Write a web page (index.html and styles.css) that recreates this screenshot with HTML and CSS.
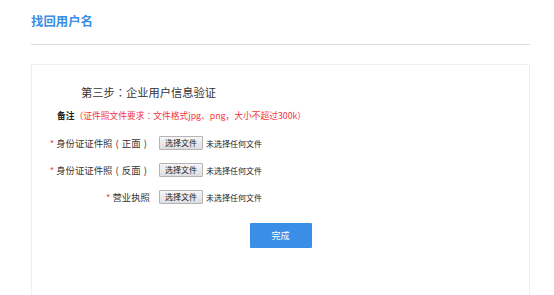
FILE: index.html
```html
<!DOCTYPE html>
<html lang="zh-CN">
<head>
<meta charset="utf-8">
<title>找回用户名</title>
<link rel="stylesheet" href="styles.css">
</head>
<body>
<div class="page">
  <div class="header">
    <h1 class="title">找回用户名</h1>
  </div>
  <div class="panel">
    <h2 class="step">第三步<span class="p" lang="ja">：</span>企业用户信息验证</h2>
    <p class="remark"><b>备注</b><span class="req">（证件照文件要求<span class="p" lang="ja">：</span>文件格式jpg、png，大小不超过300k）</span></p>
    <div class="row">
      <div class="label"><span class="star">*</span>身份证证件照<span class="pr">(</span>正面<span class="pr">)</span></div>
      <div class="file"><span class="fbtn">选择文件</span><span class="ftext">未选择任何文件</span></div>
    </div>
    <div class="row">
      <div class="label"><span class="star">*</span>身份证证件照<span class="pr">(</span>反面<span class="pr">)</span></div>
      <div class="file"><span class="fbtn">选择文件</span><span class="ftext">未选择任何文件</span></div>
    </div>
    <div class="row">
      <div class="label"><span class="star">*</span>营业执照</div>
      <div class="file"><span class="fbtn">选择文件</span><span class="ftext">未选择任何文件</span></div>
    </div>
    <div class="actions">
      <button class="done" type="button">完成</button>
    </div>
  </div>
</div>
</body>
</html>
```

FILE: styles.css
```css
html, body {
  margin: 0;
  padding: 0;
  background: #fff;
  font-family: "Noto Sans CJK SC", "Noto Sans", sans-serif;
  color: #333;
}
.p {
  font-family: "Noto Sans CJK JP", "Noto Sans CJK SC", sans-serif;
}
.pr {
  display: inline-block;
  width: 1em;
  text-align: center;
}
.page {
  padding: 0 24px 0 31px;
}
.header {
  padding-top: 14px;
  padding-bottom: 16px;
  border-bottom: 1px solid #dcdcdc;
}
.title {
  margin: 0;
  font-size: 12.4px;
  line-height: 14px;
  font-weight: bold;
  color: #3a8ee6;
}
.panel {
  margin-top: 19px;
  border: 1px solid #efefef;
  padding: 20px 0 60px 0;
  min-height: 200px;
}
.step {
  margin: 0;
  padding-left: 49px;
  font-size: 11.25px;
  line-height: 14px;
  font-weight: normal;
  color: #333;
}
.remark {
  margin: 11px 0 0 0;
  padding-left: 25px;
  font-size: 8.75px;
  line-height: 12px;
}
.remark b {
  color: #222;
}
.req {
  color: #f5353b;
}
.row {
  display: flex;
  align-items: center;
  margin-top: 13px;
  height: 14px;
}
.remark + .row {
  margin-top: 14px;
}
.label {
  width: 118px;
  flex: none;
  text-align: right;
  font-size: 9.4px;
  line-height: 14px;
  color: #333;
}
.star {
  color: #f05050;
  margin-right: 2px;
}
.file {
  display: flex;
  align-items: center;
  margin-left: 9px;
  font-size: 8px;
}
.fbtn {
  box-sizing: border-box;
  width: 44px;
  height: 14px;
  line-height: 12px;
  text-align: center;
  border: 1px solid #b4b4b4;
  border-radius: 1px;
  background: linear-gradient(#f6f6f6, #dedede);
  color: #222;
}
.ftext {
  margin-left: 3px;
  color: #222;
}
.actions {
  display: flex;
  justify-content: center;
  margin-top: 19px;
}
.done {
  width: 62px;
  height: 25px;
  border: none;
  border-radius: 1px;
  background: #3a8ee6;
  color: #fff;
  font-family: inherit;
  font-size: 9px;
  padding: 0;
}
```
